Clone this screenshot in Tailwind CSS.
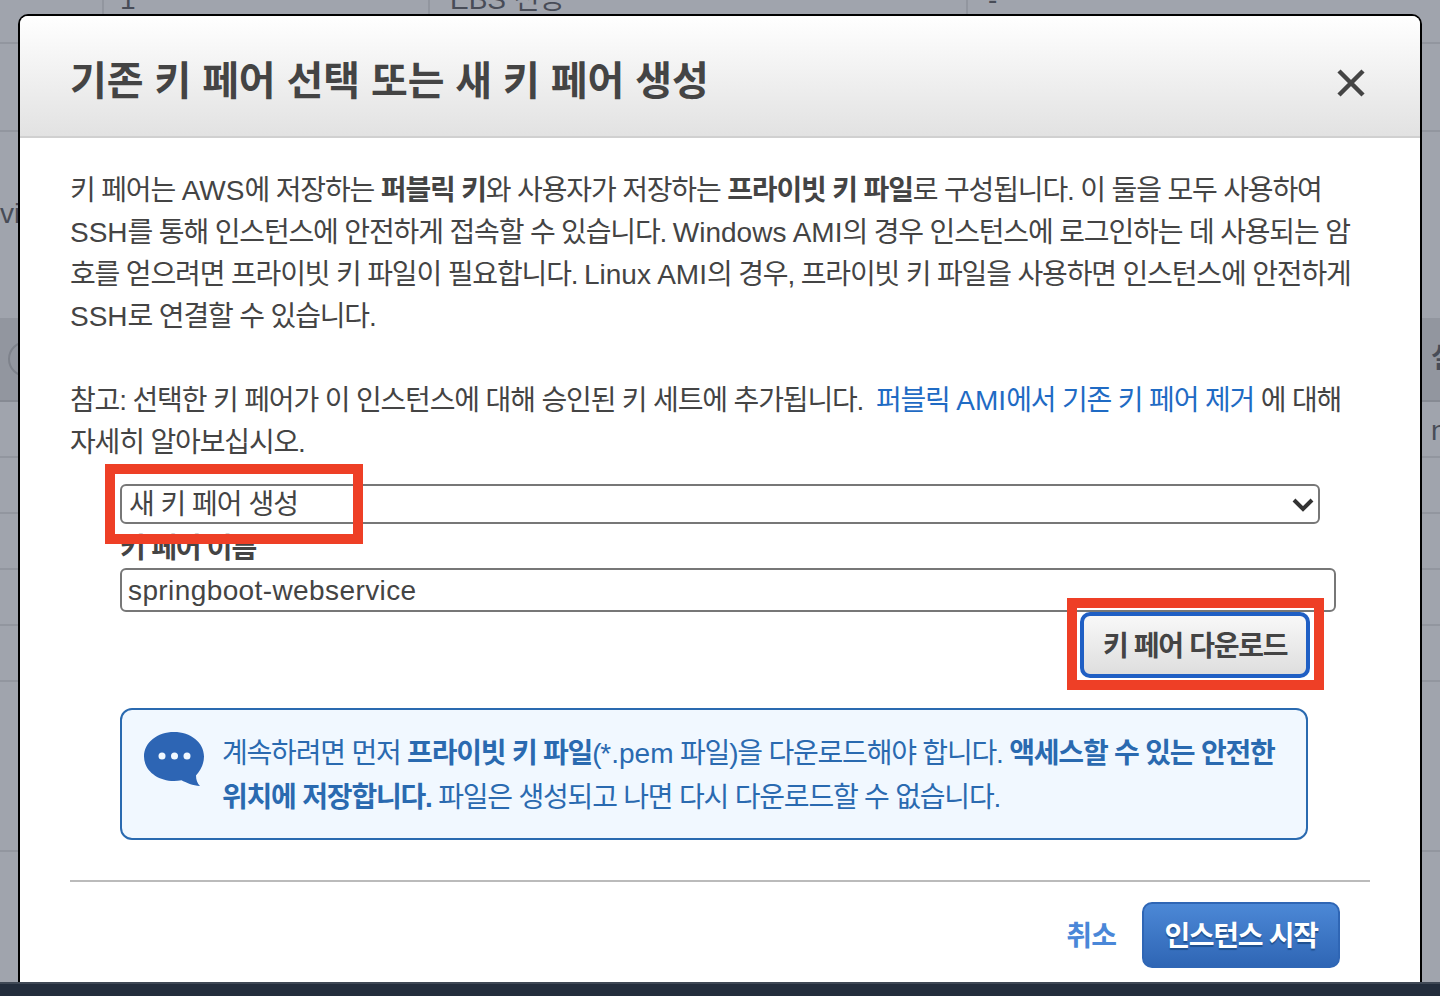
<!DOCTYPE html>
<html lang="ko">
<head>
    <meta charset="UTF-8">
    <meta name="viewport" content="width=device-width, initial-scale=1.0">
    <title>기존 키 페어 선택 또는 새 키 페어 생성</title>
    <script src="https://cdn.jsdelivr.net/npm/@tailwindcss/browser@4"></script>
</head>
<body class="font-['Liberation_Sans','Noto_Sans_CJK_KR',sans-serif]">
    <div class="relative h-[996px] w-[1440px] overflow-hidden bg-[#a0a4ad] text-[#444]">
        <!-- table behind the dimmed overlay -->
        <div class="flex h-[982px] flex-col text-[#484c57]">
            <div class="flex h-[44px] border-b-2 border-[#92969f] text-[28px] leading-[24px]">
                <div class="h-full w-[104px] border-r-2 border-[#92969f]"></div>
                <div class="h-full w-[326px] border-r-2 border-[#92969f] pl-[16px] -mt-[12px]">1</div>
                <div class="h-full w-[538px] border-r-2 border-[#92969f] pl-[20px] -mt-[12px]">EBS 전용</div>
                <div class="h-full pl-[20px] -mt-[12px]">-</div>
            </div>
            <div class="h-[88px] border-b-2 border-[#92969f]"></div>
            <div class="h-[186px] pt-[66px] text-[28px] leading-[32px]">vi</div>
            <div class="flex h-[84px] items-center justify-between border-b-2 border-[#868a93] bg-[#92969f] pl-[8px] pr-0 text-[28px] font-bold">
                <div class="size-[36px] rounded-full border-2 border-[#7e828b]"></div>
                <div class="w-[9px] overflow-hidden whitespace-nowrap">설명</div>
            </div>
            <div class="flex h-[56px] justify-end overflow-hidden border-b-2 border-[#92969f] pt-[8px] text-[28px]"><span class="w-[9px] overflow-hidden">n</span></div>
            <div class="h-[56px] border-b-2 border-[#92969f]"></div>
            <div class="h-[56px] border-b-2 border-[#92969f]"></div>
            <div class="h-[56px] border-b-2 border-[#92969f]"></div>
            <div class="h-[56px] border-b-2 border-[#92969f]"></div>
            <div class="h-[170px] border-b-2 border-[#92969f]"></div>
        </div>
        <div class="h-[14px] border-t-2 border-[#3f4855] bg-[#232d3c]"></div>

        <!-- modal -->
        <div class="absolute left-[18px] top-[14px] h-[968px] w-[1404px] overflow-hidden rounded-t-[10px] border-x-2 border-t-2 border-black bg-white">
            <div class="flex h-[122px] items-center justify-between border-b-2 border-[#d0d0d0] bg-gradient-to-b from-white to-[#e2e2e2] pl-[50px] pr-[54px]">
                <h1 class="mt-[10px] text-[40px] font-bold leading-[60px] tracking-[-0.1px] text-[#444]">기존 키 페어 선택 또는 새 키 페어 생성</h1>
                <svg class="mt-[14px] size-[30px]" viewBox="0 0 30 30" fill="none" stroke="#444" stroke-width="4.5"><path d="M3 3 27 27M27 3 3 27"/></svg>
            </div>
            <div class="px-[50px] pt-[32px] text-[28px] leading-[42px] text-[#444]">
                <p class="whitespace-nowrap tracking-[-1.15px]">키 페어는 <span class="tracking-normal">AWS</span>에 저장하는 <b>퍼블릭 키</b>와 사용자가 저장하는 <b>프라이빗 키 파일</b>로 구성됩니다. 이 둘을 모두 사용하여<br><span class="tracking-normal">SSH</span>를 통해 인스턴스에 안전하게 접속할 수 있습니다. <span class="tracking-normal">Windows AMI</span>의 경우 인스턴스에 로그인하는 데 사용되는 암<br>호를 얻으려면 프라이빗 키 파일이 필요합니다. <span class="tracking-normal">Linux AMI</span>의 경우, 프라이빗 키 파일을 사용하면 인스턴스에 안전하게<br><span class="tracking-normal">SSH</span>로 연결할 수 있습니다.</p>
                <p class="mt-[42px] whitespace-nowrap tracking-[-1.15px]">참고: 선택한 키 페어가 이 인스턴스에 대해 승인된 키 세트에 추가됩니다. <a class="ml-[6px] text-[#1f6bc4]">퍼블릭 <span class="tracking-normal">AMI</span>에서 기존 키 페어 제거</a> 에 대해<br>자세히 알아보십시오.</p>

                <div class="ml-[50px] mt-[20px] flex h-[40px] w-[1200px] items-center justify-between rounded-[6px] border-2 border-[#777] bg-white pl-[7px] pr-[4px] pt-[2px] text-[28px] leading-[34px] tracking-[-1px] text-[#444]">
                    <span>새 키 페어 생성</span>
                    <svg class="h-[16px] w-[22px]" viewBox="0 0 22 16" fill="none" stroke="#333" stroke-width="4"><path d="M2 3l9 9 9-9"/></svg>
                </div>
                <label class="ml-[50px] block h-[44px] pt-[3px] text-[28px] font-bold leading-[44px] tracking-[-1.2px] text-[#444]">키 페어 이름</label>
                <input class="ml-[50px] block h-[44px] w-[1216px] rounded-[6px] border-2 border-[#777] px-[6px] pt-[2px] text-[28px] tracking-[0.4px] text-[#444]" value="springboot-webservice">
                <div class="flex w-[1240px] justify-end">
                    <button class="h-[66px] w-[230px] rounded-[10px] border-4 border-[#1f5fc4] bg-gradient-to-b from-[#f8f8f8] to-[#dedede] pt-[4px] text-[28px] font-bold tracking-[-1.3px] text-[#444]">키 페어 다운로드</button>
                </div>

                <div class="ml-[50px] mt-[30px] flex h-[132px] w-[1188px] rounded-[12px] border-2 border-[#2a6ab0] bg-[#f1f8ff] pl-[22px] pt-[22px] text-[#2a6ab0]">
                    <svg class="h-[56px] w-[60px] shrink-0" viewBox="0 0 60 56"><path fill="#2d65b4" d="M30 0C13.500 0 0 10.500 0 24.500 0 38.500 13.500 49 30 49c2.500 0 5-.2 7.500-.7C42 50.500 49 54 56 54c-2.500-2.500-4-6-4-10.500C56.500 38.500 60 32 60 24.500 60 10.500 46.500 0 30 0z"/><circle cx="18" cy="24" r="3.500" fill="#f1f8ff"/><circle cx="30.500" cy="24" r="3.500" fill="#f1f8ff"/><circle cx="43" cy="24" r="3.500" fill="#f1f8ff"/></svg>
                    <p class="ml-[18px] whitespace-nowrap text-[28px] leading-[44px] tracking-[-1.2px]">계속하려면 먼저 <b>프라이빗 키 파일</b>(<span class="tracking-normal">*.pem</span> 파일)을 다운로드해야 합니다. <b>액세스할 수 있는 안전한<br>위치에 저장합니다.</b> 파일은 생성되고 나면 다시 다운로드할 수 없습니다.</p>
                </div>

                <div class="mt-[40px] border-t-2 border-[#bbb]"></div>
                <div class="mt-[20px] flex items-center justify-end gap-[26px] pr-[30px]">
                    <a class="mt-[3px] font-bold tracking-[-0.9px] text-[#4a87d8]">취소</a>
                    <button class="h-[66px] w-[198px] rounded-[10px] border-2 border-[#2f66b5] bg-gradient-to-b from-[#4c88d6] to-[#2f66b5] pt-[3px] text-[28px] font-bold tracking-[-1.3px] text-white [text-shadow:0_2px_1px_#20508f]">인스턴스 시작</button>
                </div>
            </div>
        </div>

        <!-- red annotation frames -->
        <div class="absolute left-[105px] top-[464px] h-[80px] w-[258px] border-[10px] border-[#ee3f26]"></div>
        <div class="absolute left-[1067px] top-[598px] h-[92px] w-[257px] border-[10px] border-[#ee3f26]"></div>
    </div>
</body>
</html>
